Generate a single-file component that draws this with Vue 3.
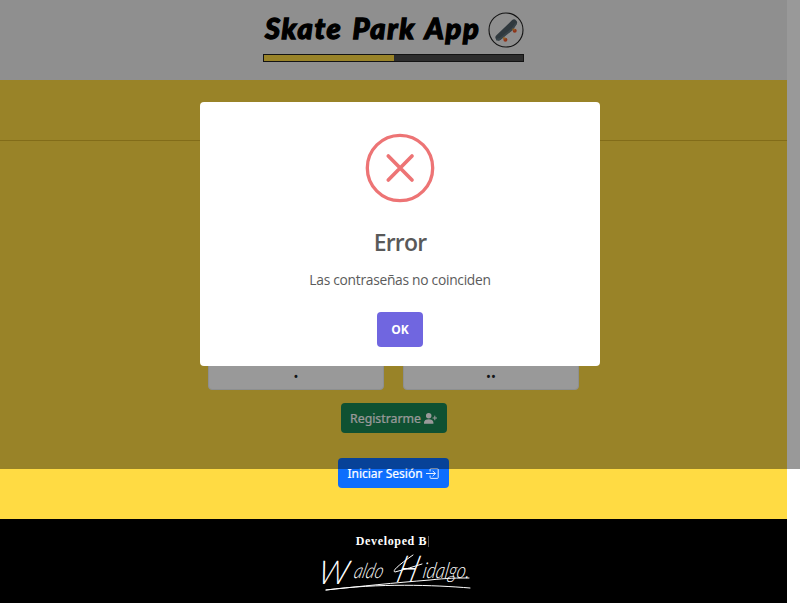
<script setup>
const passwords = ['•', '••']
</script>

<template>
  <div class="screen">
    <div class="page">
      <header class="header">
        <div class="brand">
          <div class="title-row">
            <h1>Skate Park App</h1>
            <svg class="logo" viewBox="0 0 36 36">
              <circle cx="18" cy="18" r="17" fill="none" stroke="#222" stroke-width="1.1" />
              <path d="M10.500 25.500L26 10.500" stroke="#505f68" stroke-width="6" stroke-linecap="round" />
              <path d="M9 27.500L12 27L24.500 17L28 11.500" fill="none" stroke="#5f727b" stroke-width="2" stroke-linecap="round" />
              <circle cx="17.400" cy="27.800" r="2" fill="#f0582c" />
              <circle cx="26.700" cy="18.700" r="2" fill="#f0582c" />
              <path d="M15 25.500L17.500 27M24.500 17L27 18" stroke="#e9a040" stroke-width="1.500" />
            </svg>
          </div>
          <div class="progress"><div class="bar"></div></div>
        </div>
      </header>
      <main class="main">
        <div class="divider"></div>
        <div class="fields">
          <div v-for="p in passwords" :key="p" class="field">{{ p }}</div>
        </div>
        <button class="btn register">
          <span class="reg-text">Registrarme</span>
          <svg width="13" height="13" viewBox="0 0 16 16" fill="currentColor">
            <path d="M0 14.500V13C0 10.500 2.500 9 5.800 9S11.600 10.500 11.600 13V14.500zM5.800 8a3.400 3.400 0 1 0 0-6.800 3.400 3.400 0 0 0 0 6.800" />
            <path d="M13.300 5V9.600M11 7.300H15.600" stroke="currentColor" stroke-width="1.300" stroke-linecap="round" />
          </svg>
        </button>
        <button class="btn login">
          <span class="login-text">Iniciar Sesión</span>
          <svg width="13" height="13" viewBox="0 0 16 16" fill="none" stroke="currentColor" stroke-width="1.100" stroke-linecap="round" stroke-linejoin="round">
            <path d="M5 5V3Q5 2 6 2H14Q15 2 15 3V13Q15 14 14 14H6Q5 14 5 13V11" />
            <path d="M.5 8H11.300M8.500 5L11.500 8L8.500 11" />
          </svg>
        </button>
      </main>
      <footer class="footer">
        <p class="developed">Developed B<span class="cursor"></span></p>
        <div class="signature">
          <svg viewBox="0 0 160 46" width="160" height="46">
            <text x="0" y="0" font-size="33" textLength="30" lengthAdjust="spacingAndGlyphs" transform="translate(3 35) skewX(-10)" class="ink">W</text>
            <text x="0" y="0" font-size="21" textLength="29" lengthAdjust="spacingAndGlyphs" transform="translate(39 29) skewX(-14)" class="ink">aldo</text>
            <text x="0" y="0" font-size="37" textLength="20" lengthAdjust="spacingAndGlyphs" transform="translate(81 33) skewX(-16)" class="ink">H</text>
            <text x="0" y="0" font-size="22" textLength="47" lengthAdjust="spacingAndGlyphs" transform="translate(108 29) skewX(-10)" class="ink">idalgo.</text>
            <path class="swash" d="M99 6Q76 22 81 23Q96 19 108 15" />
            <path class="swash" d="M12 41C50 37 78 34 116 31C133 29 144 29 155 29M12 41C65 34 120 36 156 39" />
          </svg>
        </div>
      </footer>
    </div>

    <div class="overlay">
      <section class="modal" role="dialog">
        <svg class="error-icon" viewBox="0 0 70 70" fill="none" stroke="#ed7475">
          <circle cx="35" cy="35" r="32.700" stroke-width="3.300" />
          <path d="M23.300 23L47 47M47 23L23.300 47" stroke-width="3.700" stroke-linecap="round" />
        </svg>
        <h2>Error</h2>
        <p class="message">Las contraseñas no coinciden</p>
        <button class="ok">OK</button>
      </section>
    </div>
  </div>
</template>

<style>
body { background: #fff; overflow: hidden; }
</style>

<style scoped>
* { box-sizing: border-box; }
.screen { position: relative; width: 800px; height: 603px; overflow: hidden; background: #fff; }
.page { width: 787px; height: 603px; display: flex; flex-direction: column; }
.header { height: 80px; background: #efefef; display: flex; justify-content: center; padding-top: 11px; }
.brand { width: 261px; }
.title-row { display: flex; align-items: center; justify-content: space-between; height: 36px; }
h1 { margin: 0 0 2px 2px; font: italic 900 29px/36px Lato, sans-serif; letter-spacing: 1.7px; color: #000; -webkit-text-stroke: 1.3px #000; white-space: nowrap; word-spacing: 2px; }
.logo { width: 36px; height: 36px; flex: none; margin-top: 1px; }
.progress { margin-top: 7px; height: 8px; border: 1px solid #202020; background: #4c4c4c; }
.bar { width: 50%; height: 100%; background: #ffdb43; }
.main { height: 439px; background: #ffdb43; display: flex; flex-direction: column; align-items: center; }
.divider { width: 100%; height: 1px; margin-top: 60px; background: #d9b52b; flex: none; }
.fields { display: flex; gap: 19px; margin-top: 219px; }
.field { width: 176px; height: 30px; border: 1px solid #eceef0; border-radius: 4px; background: #fff; text-align: center; font: 13px/30px "Noto Sans", sans-serif; color: #212529; }
.btn { display: flex; align-items: center; justify-content: center; gap: 3px; height: 30px; border: 0; border-radius: 4px; color: #fff; font: 12.3px/30px "Noto Sans", sans-serif; padding: 1px 0 0; white-space: nowrap; flex: none; }
.register { width: 106px; margin-top: 13px; background: #198754; }
.login { width: 111px; margin-top: 25px; margin-right: 1px; background: #0d6efd; font-size: 12px; }
.reg-text, .login-text { -webkit-text-stroke: 0.2px currentColor; }
.footer { height: 84px; background: #000; color: #fff; display: flex; flex-direction: column; align-items: center; padding-top: 14px; }
.developed { margin: 0; font: bold 12px/16px "Liberation Serif", serif; display: flex; align-items: center; letter-spacing: 0.65px; margin-right: 2px; }
.cursor { width: 1px; height: 11px; margin-left: 1px; background: #555; }
.signature { height: 46px; }
.signature svg { overflow: visible; display: block; }
.ink { font-family: Lato, sans-serif; font-weight: 300; font-style: italic; fill: #fff; }
.swash { fill: none; stroke: #fff; stroke-width: 1; stroke-linecap: round; }
.overlay { position: absolute; top: 0; left: 0; width: 800px; height: 469px; display: flex; justify-content: center; align-items: center; padding-bottom: 1px; background: rgba(0, 0, 0, 0.4); }
.modal { width: 400px; height: 264px; border-radius: 4px; background: #fff; display: flex; flex-direction: column; align-items: center; padding-top: 31px; font-family: "Open Sans", sans-serif; }
.error-icon { width: 70px; height: 70px; flex: none; }
h2 { margin: 22px 0 0; font: 600 23px/34px "Open Sans", sans-serif; letter-spacing: -0.8px; color: #595959; }
.message { margin: 11px 0 0; font-size: 13.800px; letter-spacing: -0.28px; line-height: 20px; color: #5b5b5b; }
.ok { width: 46px; height: 35px; margin-top: 22px; padding: 0; border: 0; border-radius: 4px; background: #7066e0; color: #fff; font: 700 12px/35px "Open Sans", sans-serif; }
</style>
